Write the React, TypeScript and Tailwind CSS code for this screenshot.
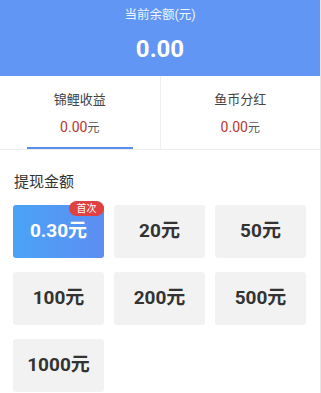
import React, { useState } from 'react';

const amounts = ['0.30元', '20元', '50元', '100元', '200元', '500元', '1000元'];

const font = { fontFamily: 'Roboto, "Noto Sans CJK SC", sans-serif' };

export default function App() {
  const [selected, setSelected] = useState(0);
  const [tab, setTab] = useState(0);

  return (
    <div className="w-[321px] h-[393px] overflow-hidden bg-white border-r border-[#e6e6e6]" style={font}>
      {/* Balance header */}
      <div className="h-[76px] bg-[#6196f4] flex flex-col items-center pt-[6px]">
        <p className="text-[12.5px] leading-[18px] text-white/90">当前余额(元)</p>
        <p className="mt-[11px] text-[24px] leading-[28px] font-bold text-white">0.00</p>
      </div>

      {/* Income tabs */}
      <div className="h-[74px] flex border-b border-[#ececec]">
        {[
          { label: '锦鲤收益', value: '0.00' },
          { label: '鱼币分红', value: '0.00' },
        ].map((t, i) => (
          <div
            key={t.label}
            onClick={() => setTab(i)}
            className={`flex-1 relative flex flex-col items-center pt-[15px] ${i === 0 ? 'border-r border-[#efefef]' : ''}`}
          >
            <p className="text-[13px] leading-[18px] text-[#444]">{t.label}</p>
            <p className="mt-[9px] leading-[18px] text-[#b9352b]">
              <span className="text-[14px]">{t.value}</span>
              <span className="text-[12px] text-[#555]">元</span>
            </p>
            {tab === i && <div className="absolute bottom-0 left-[27px] w-[106px] h-[2px] bg-[#5b8def]" />}
          </div>
        ))}
      </div>

      {/* Withdraw amount */}
      <div className="px-[13px] pt-[22px]">
        <p className="text-[15px] leading-[20px] text-[#333] ml-px">提现金额</p>
        <div className="mt-[13px] grid grid-cols-3 gap-x-[10px] gap-y-[14px] mr-[1px]">
          {amounts.map((a, i) => (
            <button
              key={a}
              onClick={() => setSelected(i)}
              className={`relative h-[53px] rounded-[3px] flex items-center justify-center text-[19px] font-bold ${
                selected === i
                  ? 'bg-gradient-to-r from-[#49a3f6] to-[#5c8ef2] text-white'
                  : 'bg-[#f2f2f2] text-[#333]'
              }`}
            >
              {a}
              {i === 0 && (
                <span className="absolute -top-[4px] right-0 h-[15px] w-[35px] rounded-full bg-[#e04141] text-white text-[10px] leading-[15px] font-normal">
                  首次
                </span>
              )}
            </button>
          ))}
        </div>
      </div>
    </div>
  );
}
